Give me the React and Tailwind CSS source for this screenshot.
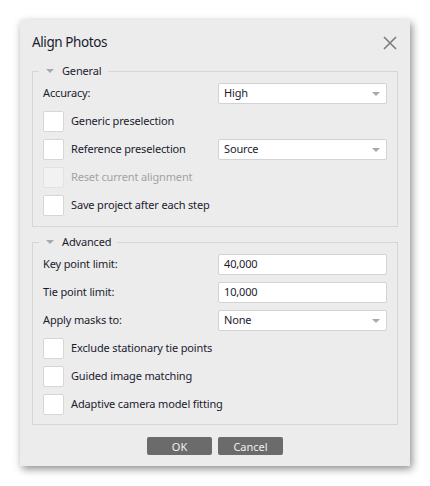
import React from 'react'

const FONT = { fontFamily: '"Noto Sans", "Open Sans", sans-serif' }

function Arrow() {
  return (
    <svg width="8" height="4" viewBox="0 0 8 4" className="shrink-0">
      <path d="M0 0h8L4 4z" fill="#a9a9a9" />
    </svg>
  )
}

function Combo({ value }) {
  return (
    <div className="flex h-[21px] w-[169px] items-center justify-between rounded-[2px] border border-[#d3d3d3] bg-white pl-[5px] pr-[6px] text-[11px] tracking-[-0.15px] text-[#1b1b2e]">
      <span>{value}</span>
      <Arrow />
    </div>
  )
}

function Field({ value }) {
  return (
    <div className="flex h-[21px] w-[169px] items-center rounded-[2px] border border-[#d3d3d3] bg-white pl-[5px] text-[11px] tracking-[-0.15px] text-[#1b1b2e]">
      {value}
    </div>
  )
}

function Check({ label, disabled, children }) {
  return (
    <div className="flex h-[21px] items-center">
      <div className="flex w-[175px] items-center">
        <div
          className={[
            'h-[21px] w-[21px] shrink-0 rounded-[2px] border',
            disabled ? 'border-[#e2e2e2] bg-[#f2f2f2]' : 'border-[#d6d6d6] bg-white',
          ].join(' ')}
        />
        <span
          className={[
            'ml-[7px] whitespace-nowrap text-[11px] tracking-[-0.15px]',
            disabled ? 'text-[#a3a3a3]' : 'text-[#1b1b2e]',
          ].join(' ')}
        >
          {label}
        </span>
      </div>
      {children}
    </div>
  )
}

function Row({ label, children }) {
  return (
    <div className="flex h-[21px] items-center">
      <span className="w-[175px] text-[11px] tracking-[-0.15px] text-[#1b1b2e]">{label}</span>
      {children}
    </div>
  )
}

function Group({ title, children, className }) {
  return (
    <fieldset className={'border border-[#d6d6d6] px-[10px] ' + className}>
      <legend className="-ml-[4px] flex h-[18px] items-center pl-[7px] pr-[6px] text-[11px] tracking-[-0.15px] text-[#1b1b2e]">
        <Arrow />
        <span className="ml-[8px]">{title}</span>
      </legend>
      <div className="flex flex-col gap-[7px]">{children}</div>
    </fieldset>
  )
}

export default function App() {
  return (
    <div className="h-[486px] w-[430px] bg-white p-5" style={FONT}>
      <div className="flex h-full flex-col bg-[#ececec] px-3 shadow-[2px_3px_8px_rgba(0,0,0,0.45)]">
        {/* title */}
        <div className="flex h-[42px] shrink-0 items-center justify-between pt-[3px]">
          <span className="text-[13.5px] tracking-[-0.4px] text-[#1b1b2e]">Align Photos</span>
          <svg width="14" height="14" viewBox="0 0 14 14" className="mr-[1px]">
            <path d="M1 1l12 12M13 1L1 13" stroke="#7c7c7c" strokeWidth="1.6" />
          </svg>
        </div>

        <Group title="General" className="pb-[10px] pt-[3px]">
          <Row label="Accuracy:">
            <Combo value="High" />
          </Row>
          <Check label="Generic preselection" />
          <Check label="Reference preselection">
            <Combo value="Source" />
          </Check>
          <Check label="Reset current alignment" disabled />
          <Check label="Save project after each step" />
        </Group>

        <Group title="Advanced" className="mt-[6px] pb-[9px] pt-[3px]">
          <Row label="Key point limit:">
            <Field value="40,000" />
          </Row>
          <Row label="Tie point limit:">
            <Field value="10,000" />
          </Row>
          <Row label="Apply masks to:">
            <Combo value="None" />
          </Row>
          <Check label="Exclude stationary tie points" />
          <Check label="Guided image matching" />
          <Check label="Adaptive camera model fitting" />
        </Group>

        <div className="mt-[12px] flex justify-center gap-[6px]">
          <button className="h-[18px] w-[65px] rounded-[2px] bg-[#6b6b6b] text-[11px] leading-none text-[#f0f0f0]">
            OK
          </button>
          <button className="h-[18px] w-[65px] rounded-[2px] bg-[#6b6b6b] text-[11px] leading-none text-[#f0f0f0]">
            Cancel
          </button>
        </div>
      </div>
    </div>
  )
}
